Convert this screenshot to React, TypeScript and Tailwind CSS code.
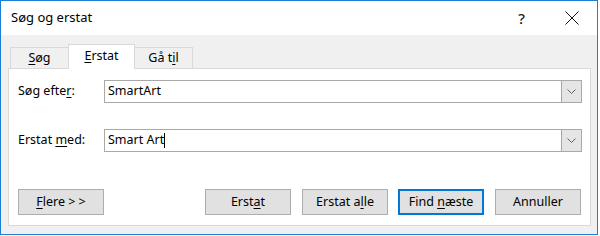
import React from 'react';

const font = { fontFamily: '"Noto Sans", "Open Sans", sans-serif' };

function Tab({ label, active, width }: { label: [string, string, string]; active?: boolean; width: string }) {
    const [a, b, c] = label;
    return (
        <div
            className={
                active
                    ? `relative -ml-px h-[25px] ${width} bg-white border border-b-0 border-[#d9d9d9] flex items-center justify-center pb-[2px]`
                    : `relative -ml-px mb-px h-[21px] ${width} bg-[#f0f0f0] border border-b-0 border-[#d9d9d9] flex items-center justify-center`
            }
        >
            <span>
                {a}
                <span className="underline underline-offset-2">{b}</span>
                {c}
            </span>
        </div>
    );
}

function Combo({ value, caret }: { value: string; caret?: boolean }) {
    return (
        <div className="flex-1 h-[23px] bg-white border border-[#a9a9a9] flex items-stretch">
            <div className="flex-1 flex items-center pl-[3px]">
                <span>{value}</span>
                {caret && <span className="w-px h-[15px] bg-black" />}
            </div>
            <div className="w-[20px] bg-[#e5e5e5] border-l border-[#a6a6a6] flex items-center justify-center">
                <svg width="9" height="5" viewBox="0 0 9 5">
                    <path d="M0.5 0.5 L4.5 4.5 L8.5 0.5" fill="none" stroke="#606060" strokeWidth="1" />
                </svg>
            </div>
        </div>
    );
}

function Btn({ children, primary, className = '' }: { children: React.ReactNode; primary?: boolean; className?: string }) {
    return (
        <div
            className={`w-[86px] h-[26px] bg-[#e1e1e1] flex items-center justify-center ${
                primary ? 'border-2 border-[#0078d7]' : 'border border-[#adadad]'
            } ${className}`}
        >
            {children}
        </div>
    );
}

export default function App() {
    return (
        <div className="w-[600px] h-[236px] bg-white text-[12.5px] text-black leading-none" style={font}>
            <div className="w-[598px] h-[235px] border border-[#1a80d6] flex flex-col">
                {/* title bar */}
                <div className="h-[34px] bg-white flex items-center pl-[10px] shrink-0">
                    <span className="text-[13px] pb-px">Søg og erstat</span>
                    <span className="ml-auto mr-[40px] text-[15px] font-medium text-[#222]">?</span>
                    <svg className="mr-[18px]" width="14" height="14" viewBox="0 0 14 14">
                        <path d="M0.5 0.5 L13.5 13.5 M13.5 0.5 L0.5 13.5" stroke="#111" strokeWidth="1" />
                    </svg>
                </div>

                <div className="flex-1 bg-[#f0f0f0] pl-[7px] pr-[6px] pt-[9px] pb-[8px] flex flex-col">
                    {/* tabs */}
                    <div className="relative z-10 flex items-end pl-[3px] -mb-px">
                        <Tab label={['', 'S', 'øg']} width="w-[59px]" />
                        <Tab label={['', 'E', 'rstat']} width="w-[67px]" active />
                        <Tab label={['Gå t', 'i', 'l']} width="w-[59px]" />
                    </div>

                    {/* panel */}
                    <div className="flex-1 bg-white border border-[#d9d9d9] pl-[9px] pr-[8px] pt-[11px] flex flex-col">
                        <div className="flex items-center">
                            <div className="w-[86px]">
                                Søg efte<span className="underline underline-offset-2">r</span>:
                            </div>
                            <Combo value="SmartArt" />
                        </div>
                        <div className="flex items-center mt-[26px]">
                            <div className="w-[86px]">
                                Erstat <span className="underline underline-offset-2">m</span>ed:
                            </div>
                            <Combo value="Smart Art" caret />
                        </div>
                        <div className="flex mt-[37px]">
                            <Btn>
                                <span>
                                    <span className="underline underline-offset-2">F</span>lere &gt; &gt;
                                </span>
                            </Btn>
                            <Btn className="ml-[101px]">
                                <span>
                                    Erst<span className="underline underline-offset-2">a</span>t
                                </span>
                            </Btn>
                            <Btn className="ml-[11px]">
                                <span>
                                    Erstat a<span className="underline underline-offset-2">l</span>le
                                </span>
                            </Btn>
                            <Btn className="ml-[10px]" primary>
                                <span>
                                    Find <span className="underline underline-offset-2">n</span>æste
                                </span>
                            </Btn>
                            <Btn className="ml-[11px]">Annuller</Btn>
                        </div>
                    </div>
                </div>
            </div>
        </div>
    );
}
